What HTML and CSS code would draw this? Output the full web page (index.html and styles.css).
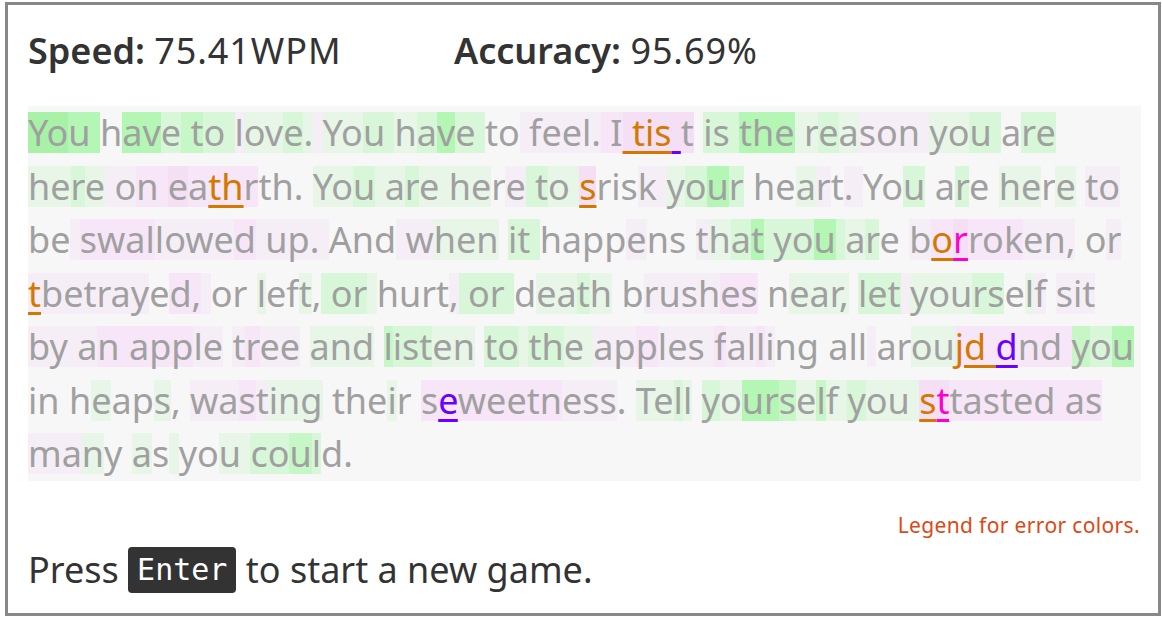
FILE: index.html
```html
<!DOCTYPE html>
<html lang="en">
<head>
<meta charset="utf-8">
<title>Typing game</title>
<link rel="stylesheet" href="styles.css">
</head>
<body>
<div class="game">
  <div class="stats">
    <div class="stat stat-speed"><b>Speed:</b> <span class="val">75.41WPM</span></div>
    <div class="stat"><b>Accuracy:</b> <span class="val">95.69%</span></div>
  </div>
  <div class="t"><span class="g4">Yo</span><span class="g3">u </span>h<span class="g3">av</span><span class="g1">e</span><span class="g2"> t</span><span class="g1">o </span><span class="p0">l</span><span class="g0">ov</span><span class="g1">e</span><span class="g0">.</span><span class="p0"> </span><span class="g0">Yo</span><span class="g1">u </span><span class="g0">h</span><span class="g1">a</span><span class="g3">v</span><span class="g1">e </span>to<span class="p0"> feel.</span><span class="p1"> I</span><span class="p2 eo"> tis</span><span class="p2 ev"> </span><span class="p2">t</span> <span class="g1">is </span><span class="g3">the</span><span class="g0"> r</span><span class="g1">e</span><span class="g0">a</span><span class="p0">son </span><span class="g0">yo</span><span class="g1">u </span>a<span class="g1">re</span> <span class="g0">h</span><span class="g0">e</span><span class="g1">r</span><span class="g0">e</span><span class="p0"> o</span><span class="p1">n </span><span class="p2">e</span><span class="p1">a</span><span class="p1 eo">th</span><span class="p1">r</span>th. <span class="g0">Yo</span><span class="g1">u</span><span class="g0"> a</span><span class="g1">r</span><span class="g0">e he</span>r<span class="p0">e</span><span class="g1"> t</span><span class="g0">o </span><span class="p2 eo">s</span>ris<span class="p0">k </span><span class="g0">y</span><span class="g1">o</span><span class="g3">u</span><span class="g1">r</span> he<span class="g0">a</span><span class="p0">r</span>t<span class="p0">. </span>Yo<span class="g1">u</span> a<span class="g1">r</span>e <span class="g0">he</span>r<span class="g0">e</span> <span class="p0">t</span><span class="p0">o</span> be<span class="p0"> </span><span class="p1">swal</span><span class="p0">lowe</span><span class="p1">d</span><span class="p0"> up. </span>And<span class="p0"> w</span><span class="g0">hen</span> <span class="g1">it </span>happ<span class="p0">e</span>ns <span class="p0">t</span><span class="g0">h</span><span class="g1">a</span><span class="g3">t</span><span class="g1"> yo</span><span class="g3">u</span><span class="g1"> </span><span class="g0">a</span><span class="g1">r</span>e <span class="p0">b</span><span class="p1 eo">o</span><span class="p2 em">r</span><span class="p1">rok</span><span class="p0">en,</span> o<span class="p0">r</span> <span class="p0 eo">t</span><span class="p0">betray</span>e<span class="p1">d,</span><span class="p0"> </span>or <span class="g0">l</span>ef<span class="g0">t</span>,<span class="g1"> or</span><span class="g0"> </span>hurt<span class="p0">,</span><span class="g1"> or </span>d<span class="g0">ea</span><span class="g1">t</span><span class="g0">h</span> b<span class="p0">rush</span><span class="p1">es</span> n<span class="g0">ear,</span> <span class="g1">let</span><span class="p0"> </span><span class="g0">you</span><span class="g1">rs</span>e<span class="g0">l</span><span class="p0">f</span> <span class="p0">sit</span> <span class="p0">by a</span><span class="p1">n app</span><span class="p0">le</span> <span class="p0">t</span><span class="p1">r</span><span class="p0">ee</span> <span class="g0">and</span> <span class="g2">l</span><span class="g1">ist</span><span class="g0">en</span> <span class="g1">to</span><span class="g0"> </span><span class="g1">th</span><span class="g0">e </span><span class="p0">ap</span><span class="p1">p</span><span class="p0">les </span><span class="p1">f</span><span class="p0">al</span><span class="p1">l</span><span class="p0">i</span>ng all<span class="p0"> </span>ar<span class="g0">ou</span><span class="p1 eo">jd </span><span class="p1 ev">d</span><span class="p1">nd </span><span class="g2">y</span><span class="g1">o</span><span class="g3">u</span> in h<span class="g0">e</span>ap<span class="g0">s</span>, <span class="p0">wa</span><span class="p1">s</span><span class="p0">t</span><span class="g0">ing</span> the<span class="g0">i</span>r <span class="p1">s</span><span class="p1 ev">e</span><span class="p1">weetn</span><span class="p0">ess</span>. <span class="g0">Te</span><span class="g1">l</span><span class="g0">l</span> <span class="g1">y</span><span class="g0">o</span><span class="g3">ur</span><span class="g2">s</span><span class="g0">e</span><span class="g2">l</span><span class="g0">f </span><span class="g1">y</span><span class="g0">ou </span><span class="p2 eo">s</span><span class="p2 em">t</span><span class="p1">tasted as</span> <span class="p0">ma</span><span class="g0">n</span>y <span class="g0">a</span>s<span class="g0"> </span>yo<span class="g0">u </span><span class="g1">co</span><span class="g2">u</span><span class="g1">l</span>d.</div>
  <div class="legend">Legend for error colors.</div>
  <p class="restart">Press <kbd>Enter</kbd> to start a new game.</p>
</div>
</body>
</html>
```
FILE: styles.css
```css
html, body {
  margin: 0;
  padding: 0;
  background: #fff;
}
body {
  font-family: "Noto Sans", "Open Sans", sans-serif;
  color: #333;
}
.game {
  box-sizing: border-box;
  width: 1156px;
  height: 614px;
  margin: 2px 0 0 5px;
  border: 3px solid #888;
  padding: 19px 17px 0 20px;
}
.stats {
  display: flex;
  font-size: 36px;
  line-height: 54px;
  color: #333;
}
.stat b {
  font-weight: 600;
}
.stat .val {
  letter-spacing: 0.9px;
}
.stat-speed {
  width: 426px;
}
.t {
  margin-top: 28px;
  background: #f7f7f7;
  color: #a0a0a0;
  font-size: 36px;
  line-height: 53.5px;
  height: 374.5px;
}
.t span {
  background-repeat: no-repeat;
  background-position: 0 50%;
  background-size: 100% 41px;
}
.g4 { background-image: linear-gradient(#a8f2a8, #a8f2a8); }
.g3 { background-image: linear-gradient(#b4f6b4, #b4f6b4); }
.g2 { background-image: linear-gradient(#c7f7c7, #c7f7c7); }
.g1 { background-image: linear-gradient(#d8f7d8, #d8f7d8); }
.g0 { background-image: linear-gradient(#e7f6e7, #e7f6e7); }
.p0 { background-image: linear-gradient(#f6eef6, #f6eef6); }
.p1 { background-image: linear-gradient(#f7e6f7, #f7e6f7); }
.p2 { background-image: linear-gradient(#f5dff5, #f5dff5); }
.eo, .ev, .em {
  text-decoration: underline;
  text-decoration-thickness: 3px;
  text-underline-offset: 5px;
}
.eo { color: #d47800; }
.ev { color: #6a00ff; }
.em { color: #ff00cc; }
.legend {
  margin-top: 29.5px;
  text-align: right;
  font-size: 21px;
  letter-spacing: 0.35px;
  line-height: 30px;
  color: #dd4814;
  padding-right: 1px;
}
.restart {
  margin: 3px 0 0;
  font-size: 36px;
  line-height: 54px;
  color: #333;
}
kbd {
  display: inline-block;
  font-family: "DejaVu Sans Mono", monospace;
  font-size: 30px;
  line-height: 46px;
  height: 46px;
  padding: 0 9px;
  background: #333;
  color: #fff;
  border-radius: 4px;
  vertical-align: 3px;
}
```
